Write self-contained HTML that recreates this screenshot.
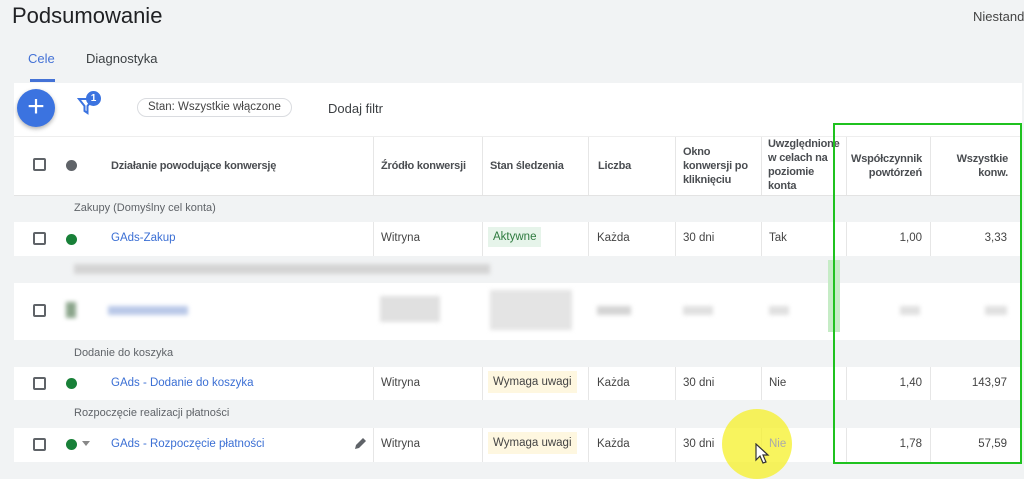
<!DOCTYPE html>
<html><head><meta charset="utf-8"><style>
*{margin:0;padding:0;box-sizing:border-box}
body{width:1024px;height:469px;overflow:hidden;background:#f1f3f4;font-family:"Liberation Sans",Arial,sans-serif;color:#3c4043;position:relative}
.abs{position:absolute}
.t{font-size:11.5px;white-space:nowrap;color:#444}
.hd{font-size:11px;font-weight:bold;color:#4a4d51;line-height:14px;letter-spacing:-0.2px}
.vl{position:absolute;width:1px;background:#e6e6e6}
.cb{position:absolute;width:13px;height:13px;border:2px solid #5f6368;border-radius:2px}
.dot{position:absolute;width:11px;height:11px;border-radius:50%;background:#188038}
.lnk{color:#3b6fd4}
.blur{position:absolute;background:#d4d4d4;filter:blur(2px)}
</style></head><body>
<div class="abs" style="left:12px;top:3px;font-size:22px;color:#202124">Podsumowanie</div>
<div class="abs t" style="left:973px;top:9px;font-size:13px">Niestand</div>
<div class="abs" style="left:28px;top:51px;font-size:13px;color:#4472d6">Cele</div>
<div class="abs" style="left:30px;top:79px;width:25px;height:3px;background:#4472d6"></div>
<div class="abs" style="left:86px;top:51px;font-size:13px">Diagnostyka</div>
<div class="abs" style="left:14px;top:83px;width:1008px;height:386px;background:#fff"></div>
<div class="abs" style="left:17px;top:89px;width:38px;height:38px;border-radius:50%;background:#3b73e0;box-shadow:0 2px 4px rgba(0,0,0,.3);color:#fff;font-size:30px;line-height:36px;text-align:center">+</div>
<svg class="abs" style="left:77px;top:96px" width="18" height="20"><path d="M2 3h14l-5.5 7v7l-3-2v-5z" fill="none" stroke="#3b73e0" stroke-width="2"/></svg>
<div class="abs" style="left:86px;top:91px;width:15px;height:15px;border-radius:50%;background:#3b73e0;color:#fff;font-size:10px;font-weight:bold;text-align:center;line-height:15px">1</div>
<div class="abs t" style="left:137px;top:98px;height:19px;padding:0 10px;border:1px solid #dadce0;border-radius:10px;line-height:17px;font-size:11.5px">Stan: Wszystkie włączone</div>
<div class="abs" style="left:328px;top:101px;font-size:13px">Dodaj filtr</div>
<div class="abs" style="left:14px;top:136px;width:1008px;height:1px;background:#eee"></div>
<div class="cb" style="left:33px;top:158px"></div>
<div class="dot" style="left:66px;top:160px;background:#5f6368"></div>
<div class="abs hd" style="left:111px;top:159px">Działanie powodujące konwersję</div>
<div class="abs hd" style="left:381px;top:159px">Źródło konwersji</div>
<div class="abs hd" style="left:490px;top:159px">Stan śledzenia</div>
<div class="abs hd" style="left:598px;top:159px">Liczba</div>
<div class="abs hd" style="left:683px;top:145px">Okno<br>konwersji po<br>kliknięciu</div>
<div class="abs hd" style="left:768px;top:137px">Uwzględnione<br>w celach na<br>poziomie<br>konta</div>
<div class="abs hd" style="left:846px;top:152px;width:76px;text-align:right">Współczynnik<br>powtórzeń</div>
<div class="abs hd" style="left:935px;top:152px;width:73px;text-align:right">Wszystkie<br>konw.</div>
<div class="abs" style="left:14px;top:195px;width:1008px;height:27px;background:#f1f3f4;border-top:1px solid #e3e3e3"></div>
<div class="abs t" style="left:74px;top:202px;font-size:11px;color:#5f6368">Zakupy (Domyślny cel konta)</div>
<div class="abs" style="left:14px;top:256px;width:1008px;height:27px;background:#f1f3f4"></div>
<div class="blur" style="left:74px;top:264px;width:416px;height:10px"></div>
<div class="abs" style="left:14px;top:340px;width:1008px;height:27px;background:#f1f3f4"></div>
<div class="abs t" style="left:74px;top:347px;font-size:11px;color:#5f6368">Dodanie do koszyka</div>
<div class="abs" style="left:14px;top:400px;width:1008px;height:28px;background:#f1f3f4"></div>
<div class="abs t" style="left:74px;top:407px;font-size:11px;color:#5f6368">Rozpoczęcie realizacji płatności</div>
<div class="abs" style="left:14px;top:462px;width:1008px;height:7px;background:#f1f3f4"></div>
<div class="vl" style="left:373px;top:137px;height:58px"></div><div class="vl" style="left:482px;top:137px;height:58px"></div><div class="vl" style="left:588px;top:137px;height:58px"></div><div class="vl" style="left:675px;top:137px;height:58px"></div><div class="vl" style="left:761px;top:137px;height:58px"></div><div class="vl" style="left:846px;top:137px;height:58px"></div><div class="vl" style="left:930px;top:137px;height:58px"></div>
<div class="vl" style="left:373px;top:222px;height:34px"></div><div class="vl" style="left:482px;top:222px;height:34px"></div><div class="vl" style="left:588px;top:222px;height:34px"></div><div class="vl" style="left:675px;top:222px;height:34px"></div><div class="vl" style="left:761px;top:222px;height:34px"></div><div class="vl" style="left:846px;top:222px;height:34px"></div><div class="vl" style="left:930px;top:222px;height:34px"></div>
<div class="vl" style="left:373px;top:367px;height:33px"></div><div class="vl" style="left:482px;top:367px;height:33px"></div><div class="vl" style="left:588px;top:367px;height:33px"></div><div class="vl" style="left:675px;top:367px;height:33px"></div><div class="vl" style="left:761px;top:367px;height:33px"></div><div class="vl" style="left:846px;top:367px;height:33px"></div><div class="vl" style="left:930px;top:367px;height:33px"></div>
<div class="vl" style="left:373px;top:428px;height:34px"></div><div class="vl" style="left:482px;top:428px;height:34px"></div><div class="vl" style="left:588px;top:428px;height:34px"></div><div class="vl" style="left:675px;top:428px;height:34px"></div><div class="vl" style="left:761px;top:428px;height:34px"></div><div class="vl" style="left:846px;top:428px;height:34px"></div><div class="vl" style="left:930px;top:428px;height:34px"></div>
<div class="cb" style="left:33px;top:232px"></div><div class="dot" style="left:66px;top:234px"></div>
<div class="abs t lnk" style="left:111px;top:232px">GAds-Zakup</div>
<div class="abs t" style="left:381px;top:232px">Witryna</div>
<div class="abs t" style="left:488px;top:227px;padding:4px 5px;background:#e6f4ea;color:#2d7a3e">Aktywne</div>
<div class="abs t" style="left:597px;top:232px">Każda</div>
<div class="abs t" style="left:683px;top:232px">30 dni</div>
<div class="abs t" style="left:769px;top:232px">Tak</div>
<div class="abs t" style="left:846px;top:232px;width:76px;text-align:right">1,00</div>
<div class="abs t" style="left:930px;top:232px;width:77px;text-align:right">3,33</div>
<div class="cb" style="left:33px;top:304px"></div>
<div class="blur" style="left:66px;top:302px;width:10px;height:16px;background:#8ba58b"></div>
<div class="blur" style="left:108px;top:306px;width:80px;height:9px;background:#b9c8e8"></div>
<div class="blur" style="left:380px;top:296px;width:60px;height:26px;background:#e0e0e0"></div>
<div class="blur" style="left:490px;top:290px;width:82px;height:40px;background:#e4e4e4"></div>
<div class="blur" style="left:597px;top:306px;width:34px;height:9px"></div>
<div class="blur" style="left:683px;top:306px;width:30px;height:9px;background:#e0e0e0"></div>
<div class="blur" style="left:769px;top:306px;width:20px;height:9px;background:#e0e0e0"></div>
<div class="blur" style="left:900px;top:306px;width:20px;height:9px;background:#e0e0e0"></div>
<div class="blur" style="left:985px;top:306px;width:22px;height:9px;background:#e0e0e0"></div>
<div class="abs" style="left:828px;top:260px;width:12px;height:72px;background:#c6ecc6"></div>
<div class="cb" style="left:33px;top:377px"></div><div class="dot" style="left:66px;top:378px"></div>
<div class="abs t lnk" style="left:111px;top:377px">GAds - Dodanie do koszyka</div>
<div class="abs t" style="left:381px;top:377px">Witryna</div>
<div class="abs t" style="left:488px;top:371px;padding:5px 5px;background:#fef7e0">Wymaga uwagi</div>
<div class="abs t" style="left:597px;top:377px">Każda</div>
<div class="abs t" style="left:683px;top:377px">30 dni</div>
<div class="abs t" style="left:769px;top:377px">Nie</div>
<div class="abs t" style="left:846px;top:377px;width:76px;text-align:right">1,40</div>
<div class="abs t" style="left:930px;top:377px;width:77px;text-align:right">143,97</div>
<div class="cb" style="left:33px;top:438px"></div><div class="dot" style="left:66px;top:439px"></div>
<div class="abs" style="left:82px;top:441px;border:4px solid transparent;border-top:5px solid #888"></div>
<div class="abs t lnk" style="left:111px;top:438px">GAds - Rozpoczęcie płatności</div>
<svg class="abs" style="left:353px;top:437px" width="14" height="14"><path d="M2 12l1-4 7-7 3 3-7 7z" fill="#5f6368"/></svg>
<div class="abs t" style="left:381px;top:438px">Witryna</div>
<div class="abs t" style="left:488px;top:432px;padding:5px 5px;background:#fef7e0">Wymaga uwagi</div>
<div class="abs t" style="left:597px;top:438px">Każda</div>
<div class="abs t" style="left:683px;top:438px">30 dni</div>
<div class="abs" style="left:722px;top:409px;width:70px;height:70px;border-radius:50%;background:rgba(245,240,40,.75)"></div>
<div class="abs t" style="left:769px;top:438px;color:#aaa">Nie</div>
<svg class="abs" style="left:754px;top:443px" width="16" height="22"><path d="M2 1v16l4-4 3 7 3-1-3-7h5z" fill="#fff" stroke="#333" stroke-width="1.2"/></svg>
<div class="abs t" style="left:846px;top:438px;width:76px;text-align:right">1,78</div>
<div class="abs t" style="left:930px;top:438px;width:77px;text-align:right">57,59</div>
<div class="abs" style="left:833px;top:123px;width:189px;height:341px;border:2px solid #1fc21f"></div>
</body></html>
